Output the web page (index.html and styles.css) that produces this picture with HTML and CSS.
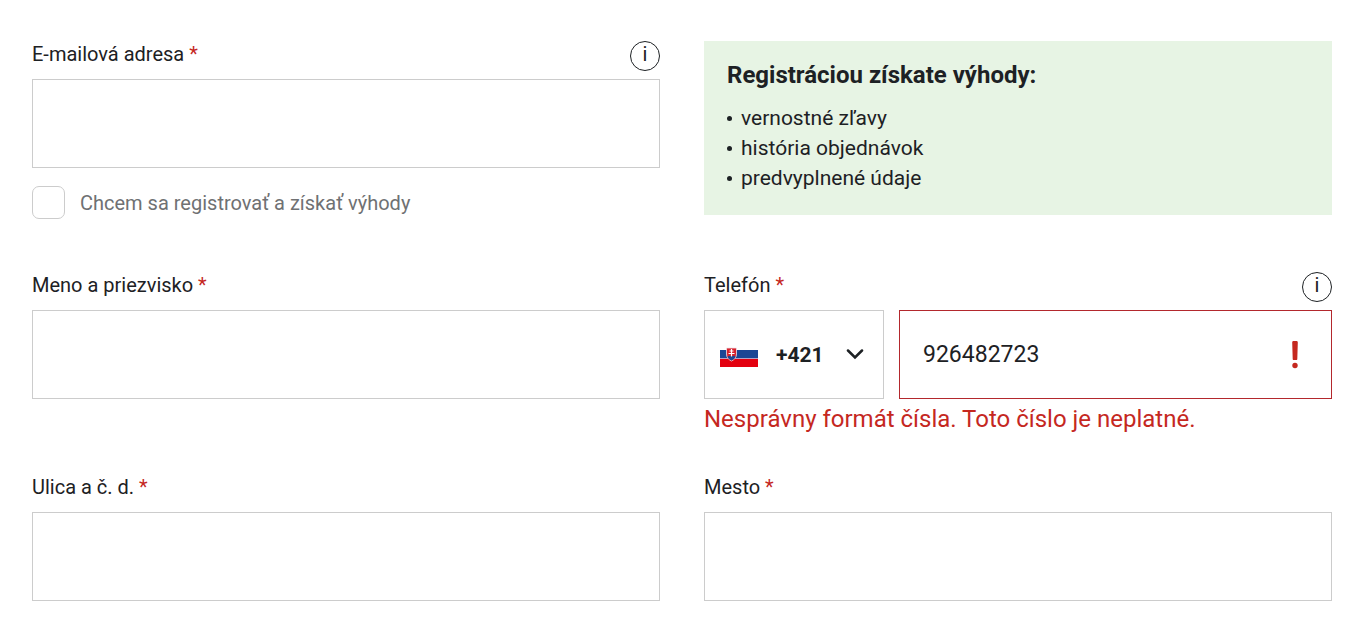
FILE: index.html
```
<!DOCTYPE html>
<html lang="sk">
<head>
    <meta charset="UTF-8">
    <meta name="viewport" content="width=device-width, initial-scale=1.0">
    <title>Dodacie údaje</title>
    <link rel="stylesheet" href="styles.css">
</head>
<body>
    <form class="checkout-form">
        <div class="form-group email-group">
            <div class="label-row">
                <label for="email">E-mailová adresa <span class="required">*</span></label>
                <button type="button" class="info">i</button>
            </div>
            <input type="email" id="email" class="field" required>
            <div class="checkbox-row">
                <input type="checkbox" id="register" class="checkbox">
                <label for="register">Chcem sa registrovať a získať výhody</label>
            </div>
        </div>

        <div class="benefits">
            <h2>Registráciou získate výhody:</h2>
            <ul>
                <li>vernostné zľavy</li>
                <li>história objednávok</li>
                <li>predvyplnené údaje</li>
            </ul>
        </div>

        <div class="form-group">
            <div class="label-row">
                <label for="name">Meno a priezvisko <span class="required">*</span></label>
            </div>
            <input type="text" id="name" class="field" required>
        </div>

        <div class="form-group">
            <div class="label-row">
                <label for="phone">Telefón <span class="required">*</span></label>
                <button type="button" class="info">i</button>
            </div>
            <div class="phone-row">
                <button type="button" class="prefix" aria-label="Predvoľba +421">
                    <svg class="flag" width="38" height="25" viewBox="0 -5 38 25">
                        <path fill="#1c4694" d="M0 3h38v8H0z"/>
                        <path fill="#e3000f" d="M0 12h38v8H0z"/>
                        <path fill="#b3a3c4" d="M0 11h38v1H0z"/>
                        <path fill="#d9202c" stroke="#f0e4ea" stroke-width=".8" d="M6.500 1h10v6c0 3.500-2 5.500-5 7-3-1.500-5-3.500-5-7z"/>
                        <path fill="#1c4694" d="M7.500 10c1-1.500 2.500-1.500 4-.5 1.500-1 3-1 4 .5-.8 1.500-2.200 2.600-4 3.500-1.800-.9-3.200-2-4-3.500z"/>
                        <path stroke="#fff" stroke-width="1.200" d="M11.500 2v7.500M9.500 4h4M8.500 6.500h6"/>
                    </svg>
                    <span>+421</span>
                    <svg class="arrow" width="18" height="12" viewBox="0 0 18 12">
                        <path d="M2 1.500l7 7 7-7" fill="none" stroke="#1d2124" stroke-width="2.500" stroke-linecap="round"/>
                    </svg>
                </button>
                <div class="phone-field">
                    <input type="tel" id="phone" class="field error" value="926482723" aria-describedby="phoneError" required>
                    <svg class="error-icon" width="8" height="28" viewBox="0 0 8 28">
                        <path fill="#c5281f" d="M1.200 1.500C1.200.5 1.700 0 2.500 0h3c.8 0 1.300.5 1.300 1.500L6.300 18c0 .6-.4 1-1 1H2.700c-.6 0-1-.4-1-1z"/>
                        <circle cx="4" cy="24.500" r="2.700" fill="#c5281f"/>
                    </svg>
                </div>
            </div>
            <div class="error-message" id="phoneError">Nesprávny formát čísla. Toto číslo je neplatné.</div>
        </div>

        <div class="form-group">
            <div class="label-row">
                <label for="street">Ulica a č. d. <span class="required">*</span></label>
            </div>
            <input type="text" id="street" class="field" required>
        </div>

        <div class="form-group">
            <div class="label-row">
                <label for="city">Mesto <span class="required">*</span></label>
            </div>
            <input type="text" id="city" class="field" required>
        </div>
    </form>
</body>
</html>
```
FILE: styles.css
```
* {
    box-sizing: border-box;
}
body {
    margin: 0;
    font-family: Roboto, "Liberation Sans", sans-serif;
    font-size: 20px;
    color: #1d2124;
    background-color: #fff;
}
input, button {
    font-family: inherit;
    color: inherit;
}
.checkout-form {
    display: grid;
    grid-template-columns: 1fr 1fr;
    align-items: start;
    gap: 40px 44px;
    padding: 41px 36px 20px 32px;
}
.email-group {
    padding-bottom: 13px;
}
.label-row {
    display: flex;
    justify-content: space-between;
    align-items: flex-start;
    height: 38px;
    line-height: 26px;
}
.required {
    color: #c5281f;
}
.info {
    width: 30px;
    height: 30px;
    padding: 0 0 4px;
    border: 1px solid #1d2124;
    border-radius: 50%;
    background: none;
    font-size: 20px;
    line-height: 24px;
    cursor: pointer;
}
.field {
    display: block;
    width: 100%;
    height: 89px;
    padding: 0 23px;
    border: 1px solid #ccc;
    border-radius: 0;
    background-color: #fff;
    font-size: 23px;
}
.field.error {
    border-color: #b3282d;
    padding-right: 60px;
}
.checkbox-row {
    display: flex;
    align-items: center;
    gap: 15px;
    margin-top: 18px;
    color: #6f7173;
}
.checkbox {
    appearance: none;
    width: 33px;
    height: 33px;
    margin: 0;
    border: 1px solid #ccc;
    border-radius: 7px;
}
.checkbox:checked {
    background-color: #1d2124;
}
.benefits {
    padding: 18px 23px 22px;
    background-color: #e7f4e4;
}
.benefits h2 {
    margin: 0 0 12px;
    font-size: 24px;
    line-height: 32px;
}
.benefits ul {
    margin: 0;
    padding: 0;
    list-style: none;
    font-size: 21px;
    line-height: 30px;
}
.benefits li {
    display: flex;
    align-items: center;
    gap: 9px;
}
.benefits li::before {
    content: "";
    width: 5px;
    height: 5px;
    border-radius: 50%;
    background-color: #1d2124;
}
.phone-row {
    display: flex;
    gap: 15px;
}
.prefix {
    display: flex;
    align-items: center;
    width: 180px;
    height: 89px;
    padding: 0 15px;
    border: 1px solid #ccc;
    background-color: #fff;
    font-size: 21px;
    font-weight: bold;
    cursor: pointer;
}
.flag {
    margin-right: 18px;
}
.arrow {
    margin-left: auto;
    margin-right: 4px;
}
.phone-field {
    position: relative;
    flex: 1;
}
.error-icon {
    position: absolute;
    top: 31px;
    right: 33px;
}
.error-message {
    margin-top: 5px;
    font-size: 24px;
    line-height: 30px;
    color: #c5281f;
}
```
